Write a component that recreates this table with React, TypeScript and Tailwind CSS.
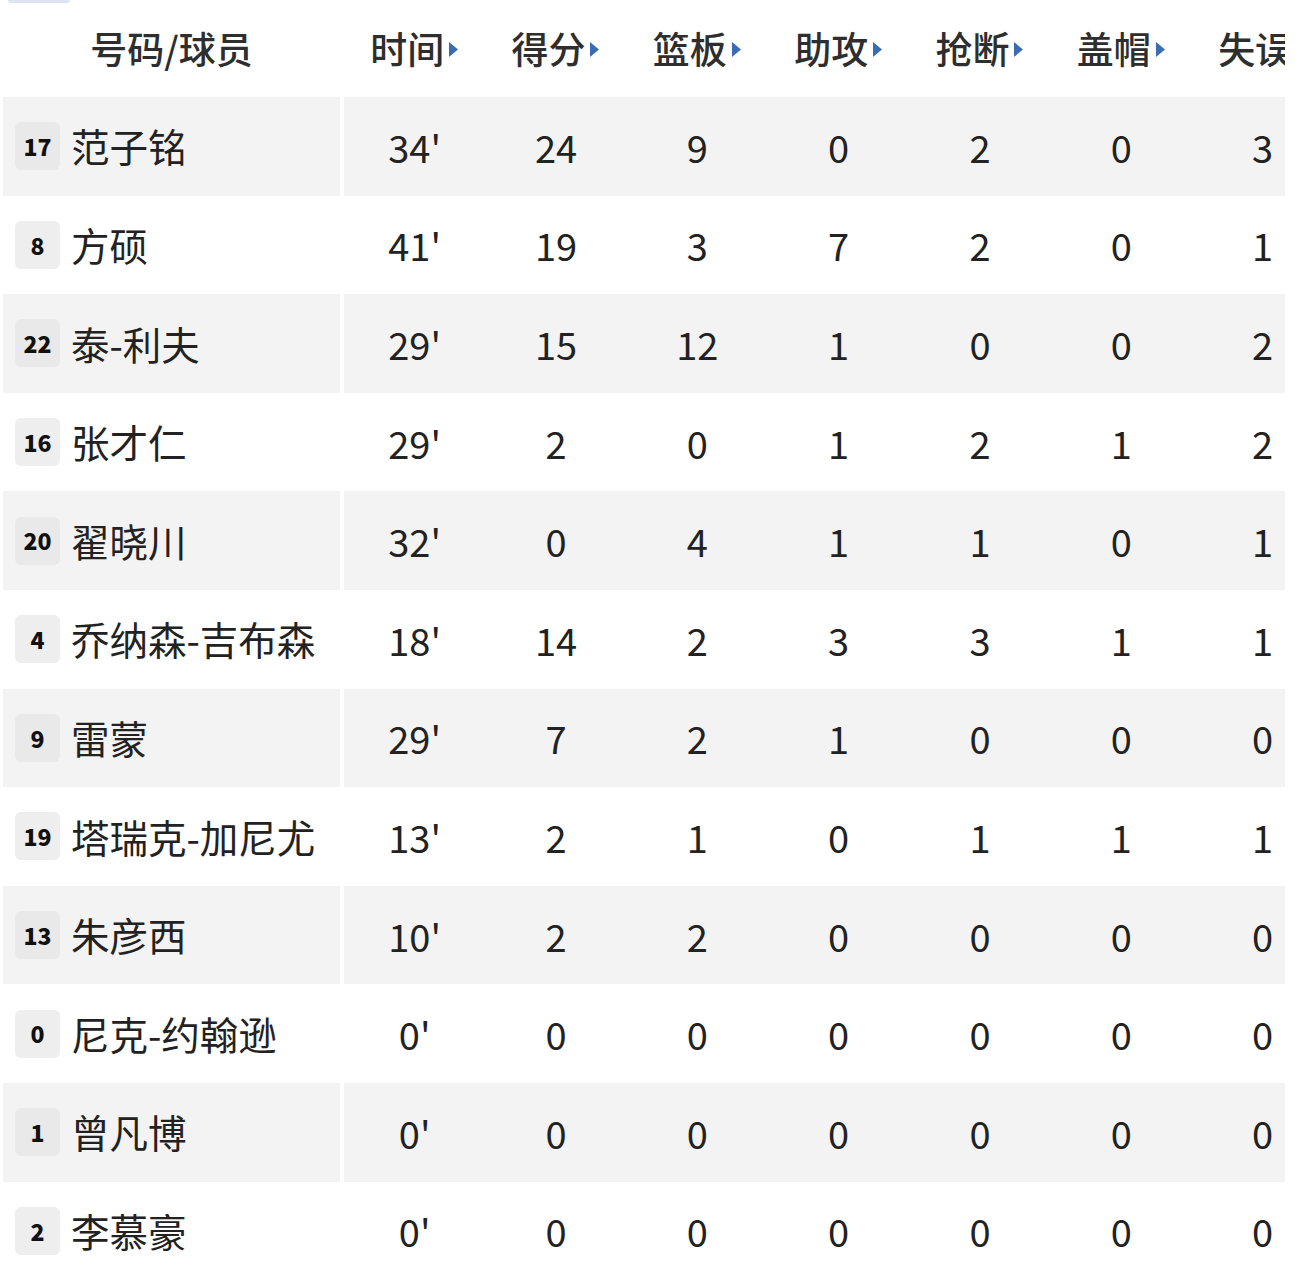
import React from "react";

const headers = ["时间", "得分", "篮板", "助攻", "抢断", "盖帽", "失误"];

const rows: [string, string, string, number, number, number, number, number, number][] = [
  ["17", "范子铭", "34'", 24, 9, 0, 2, 0, 3],
  ["8", "方硕", "41'", 19, 3, 7, 2, 0, 1],
  ["22", "泰-利夫", "29'", 15, 12, 1, 0, 0, 2],
  ["16", "张才仁", "29'", 2, 0, 1, 2, 1, 2],
  ["20", "翟晓川", "32'", 0, 4, 1, 1, 0, 1],
  ["4", "乔纳森-吉布森", "18'", 14, 2, 3, 3, 1, 1],
  ["9", "雷蒙", "29'", 7, 2, 1, 0, 0, 0],
  ["19", "塔瑞克-加尼尤", "13'", 2, 1, 0, 1, 1, 1],
  ["13", "朱彦西", "10'", 2, 2, 0, 0, 0, 0],
  ["0", "尼克-约翰逊", "0'", 0, 0, 0, 0, 0, 0],
  ["1", "曾凡博", "0'", 0, 0, 0, 0, 0, 0],
  ["2", "李慕豪", "0'", 0, 0, 0, 0, 0, 0],
];

const font = { fontFamily: '"Noto Sans CJK SC", "Noto Sans", sans-serif' };

export default function App() {
  return (
    <div
      className="relative w-[1308px] h-[1280px] bg-white overflow-hidden pl-[3px]"
      style={font}
    >
      <div className="absolute top-0 left-[8px] w-[62px] h-[3px] rounded-b bg-[#dfe2f2]" />
      <div className="w-[1282px] overflow-hidden">
        {/* header */}
        <div className="flex h-[97px] items-center text-[#2e2e2e] text-[37px] font-medium">
          <div className="w-[337px] shrink-0 text-center">号码/球员</div>
          <div className="w-[4px] shrink-0" />
          {headers.map((h) => (
            <div
              key={h}
              className="w-[141.33px] shrink-0 flex items-center justify-center whitespace-nowrap"
            >
              <span>{h}</span>
              <svg width="11" height="17" viewBox="0 0 11 17" className="ml-[4px] mt-[2px]">
                <path d="M1 1 L10 8.5 L1 16 Z" fill="#3a6cb4" />
              </svg>
            </div>
          ))}
        </div>
        {rows.map((r, i) => {
          const bg = i % 2 === 0 ? "bg-[#f3f3f3]" : "bg-white";
          const badge = i % 2 === 0 ? "bg-[#e9e9e9]" : "bg-[#eeeeee]";
          const stats = r.slice(2) as (string | number)[];
          return (
            <div key={i} className="flex h-[98.6px]">
              <div className={`w-[337px] shrink-0 flex items-center pl-[12px] ${bg}`}>
                <div
                  className={`w-[45px] h-[48px] rounded-[6px] ${badge} flex items-center justify-center text-[23px] font-extrabold text-[#111]`}
                >
                  {r[0]}
                </div>
                <div className="ml-[11px] text-[38.5px] text-[#222] whitespace-nowrap">{r[1]}</div>
              </div>
              <div className="w-[4px] shrink-0 bg-white" />
              <div className={`flex shrink-0 ${bg}`}>
                {stats.map((s, j) => (
                  <div
                    key={j}
                    className="w-[141.33px] shrink-0 flex items-center justify-center text-[38px] text-[#222]"
                  >
                    {s}
                  </div>
                ))}
              </div>
            </div>
          );
        })}
      </div>
    </div>
  );
}
